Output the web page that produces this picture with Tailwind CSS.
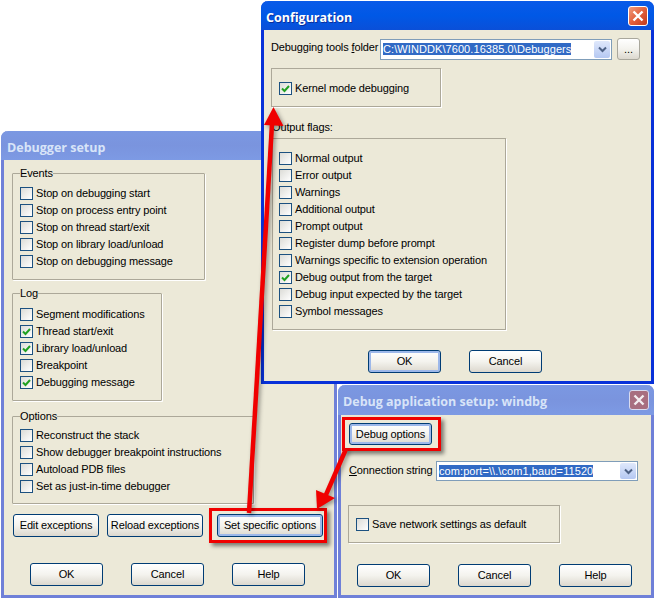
<!DOCTYPE html>
<html lang="en">
<head>
<meta charset="UTF-8">
<title>Debugger setup</title>
<script src="https://cdn.jsdelivr.net/npm/@tailwindcss/browser@4"></script>
</head>
<body class="bg-white">
<div class="relative w-[654px] h-[600px] overflow-hidden bg-white text-[11px] leading-[13px] tracking-[-0.13px] text-black font-['Liberation_Sans',sans-serif]">

  <!-- Debugger setup window (inactive) -->
  <div class="absolute left-[1px] top-[131px] w-[336px] h-[467px] flex flex-col rounded-t-[7px] bg-[#ece9d8] border-x-[3px] border-b-[3px] border-[#6f80d8]">
    <div class="-mx-[3px] h-[29px] shrink-0 flex items-center pl-[6px] pt-[3px] rounded-t-[7px] bg-gradient-to-b from-[#7b98e2] via-[#7a94de] to-[#7d9ae4] text-[#d8e4f8] font-bold tracking-normal text-[12.5px] font-['Open_Sans',sans-serif]">Debugger setup</div>
    <div class="flex flex-col pl-[8px] pt-[7px]">
      <fieldset class="w-[193px] border border-[#aca899] rounded-[1px] shadow-[1px_1px_0_#fff] px-[7px] pt-[5px] pb-[9px]">
        <legend>Events</legend>
        <div data-rows="Stop on debugging start|Stop on process entry point|Stop on thread start/exit|Stop on library load/unload|Stop on debugging message"></div>
      </fieldset>
      <fieldset class="mt-[7px] w-[150px] border border-[#aca899] rounded-[1px] shadow-[1px_1px_0_#fff] px-[7px] pt-[6px] pb-[9px]">
        <legend>Log</legend>
        <div data-rows="Segment modifications|*Thread start/exit|*Library load/unload|Breakpoint|*Debugging message"></div>
      </fieldset>
      <fieldset class="mt-[9px] w-[242px] border border-[#aca899] rounded-[1px] shadow-[1px_1px_0_#fff] px-[7px] pt-[4px] pb-[8px]">
        <legend>Options</legend>
        <div data-rows="Reconstruct the stack|Show debugger breakpoint instructions|Autoload PDB files|Set as just-in-time debugger"></div>
      </fieldset>
      <div class="mt-[10px] flex ml-[1px]">
        <button class="w-[86px] h-[23px] rounded-[3px] border border-[#003c74] bg-gradient-to-b from-white via-[#f4f3ee] to-[#dcd8ce]">Edit exceptions</button>
        <button class="ml-[8px] w-[96px] h-[23px] rounded-[3px] border border-[#003c74] bg-gradient-to-b from-white via-[#f4f3ee] to-[#dcd8ce]">Reload exceptions</button>
        <div class="relative ml-[14px]">
          <button class="w-[106px] h-[23px] rounded-[3px] border border-[#003c74] bg-gradient-to-b from-white via-[#f4f3ee] to-[#dcd8ce] shadow-[inset_0_0_0_2px_#9db8ea]">Set specific options</button>
          <div class="absolute -left-[8px] -top-[6px] -right-[4px] -bottom-[6px] border-[3px] border-[#f00000] shadow-[3px_3px_4px_#0000007a]"></div>
        </div>
      </div>
      <div class="mt-[26px] ml-[18px] flex gap-[28px]">
        <button class="w-[73px] h-[23px] rounded-[3px] border border-[#003c74] bg-gradient-to-b from-white via-[#f4f3ee] to-[#dcd8ce]">OK</button>
        <button class="w-[73px] h-[23px] rounded-[3px] border border-[#003c74] bg-gradient-to-b from-white via-[#f4f3ee] to-[#dcd8ce]">Cancel</button>
        <button class="w-[73px] h-[23px] rounded-[3px] border border-[#003c74] bg-gradient-to-b from-white via-[#f4f3ee] to-[#dcd8ce]">Help</button>
      </div>
    </div>
  </div>

  <!-- Debug application setup window (inactive) -->
  <div class="absolute left-[338px] top-[385px] w-[316px] h-[213px] flex flex-col rounded-t-[7px] bg-[#ece9d8] border-x-[3px] border-b-[3px] border-[#6f80d8]">
    <div class="-mx-[3px] h-[30px] shrink-0 flex items-center justify-between pl-[5px] pr-[5px] rounded-t-[7px] bg-gradient-to-b from-[#7b98e2] via-[#7a94de] to-[#7d9ae4] text-[#d8e4f8] font-bold tracking-normal text-[12.5px] font-['Open_Sans',sans-serif]">
      <span class="pt-[2px]">Debug application setup: windbg</span>
      <span class="w-[20px] h-[20px] flex items-center justify-center rounded-[3px] border border-[#d8dcf0] bg-[#a86f80]">
        <svg width="12" height="12" viewBox="0 0 12 12"><path d="M1.5 1.5 10.5 10.5M10.5 1.5 1.5 10.5" stroke="#f4eef0" stroke-width="2.4" fill="none"/></svg>
      </span>
    </div>
    <div class="flex flex-col pl-[8px] pt-[8px]">
      <div class="relative w-[83px]">
        <button class="w-[83px] h-[22px] rounded-[3px] border border-[#003c74] bg-gradient-to-b from-white via-[#f4f3ee] to-[#dcd8ce] shadow-[inset_0_0_0_2px_#9db8ea]">Debug options</button>
        <div class="absolute -left-[7px] -top-[6px] -right-[9px] -bottom-[6px] border-[3px] border-[#f00000] shadow-[3px_3px_4px_#0000007a]"></div>
      </div>
      <div class="mt-[16px] flex items-center">
        <span class="w-[87px] pb-[2px]"><u>C</u>onnection string</span>
        <div class="w-[202px] h-[20px] flex items-center border border-[#7f9db9] bg-white pl-[2px] pr-[1px]">
          <span class="flex-1 overflow-hidden whitespace-nowrap tracking-[0.08px]"><span class="bg-[#316ac5] text-white">com:port=\\.\com1,baud=11520</span></span>
          <span class="w-[16px] h-[16px] flex items-center justify-center rounded-[2px] bg-gradient-to-b from-[#dfe8fb] to-[#b5c8f2]">
            <svg width="9" height="7" viewBox="0 0 9 7"><path d="M1 1.5 4.5 5 8 1.5" stroke="#4d6185" stroke-width="2" fill="none"/></svg>
          </span>
        </div>
      </div>
      <div class="mt-[24px] -ml-[1px] w-[212px] h-[38px] flex items-center pl-[7px] border border-[#aca899] shadow-[1px_1px_0_#fff]">
        <div class="w-full" data-rows="Save network settings as default"></div>
      </div>
      <div class="mt-[21px] ml-[8px] flex gap-[28px]">
        <button class="w-[73px] h-[23px] rounded-[3px] border border-[#003c74] bg-gradient-to-b from-white via-[#f4f3ee] to-[#dcd8ce]">OK</button>
        <button class="w-[73px] h-[23px] rounded-[3px] border border-[#003c74] bg-gradient-to-b from-white via-[#f4f3ee] to-[#dcd8ce]">Cancel</button>
        <button class="w-[73px] h-[23px] rounded-[3px] border border-[#003c74] bg-gradient-to-b from-white via-[#f4f3ee] to-[#dcd8ce]">Help</button>
      </div>
    </div>
  </div>

  <!-- Configuration window (active) -->
  <div class="absolute left-[261px] top-[1px] w-[393px] h-[383px] flex flex-col rounded-t-[7px] bg-[#ece9d8] border-x-[3px] border-b-[3px] border-[#0831d9]">
    <div class="-mx-[3px] h-[29px] shrink-0 flex items-center justify-between pl-[5px] pr-[6px] rounded-t-[7px] bg-gradient-to-b from-[#0a5ae8] via-[#0058e6] to-[#0a4fd8] text-white font-bold tracking-normal text-[12.5px] font-['Open_Sans',sans-serif] [text-shadow:1px_1px_0_#0b2f9c]">
      <span class="pt-[3px]">Configuration</span>
      <span class="w-[20px] h-[20px] flex items-center justify-center rounded-[3px] border border-white bg-gradient-to-br from-[#ef9a7c] via-[#e2603c] to-[#c0391a]">
        <svg width="12" height="12" viewBox="0 0 12 12"><path d="M1.5 1.5 10.5 10.5M10.5 1.5 1.5 10.5" stroke="#fff" stroke-width="2.4" fill="none"/></svg>
      </span>
    </div>
    <div class="flex flex-col pl-[7px] pt-[8px]">
      <div class="flex items-center">
        <span class="w-[109px] pb-[3px] whitespace-nowrap">Debugging tools <u>f</u>older</span>
        <div class="w-[232px] h-[21px] flex items-center border border-[#7f9db9] bg-white pl-[2px] pr-[1px]">
          <span class="flex-1 overflow-hidden whitespace-nowrap tracking-[0.08px]"><span class="bg-[#316ac5] text-white">C:\WINDDK\7600.16385.0\Debuggers</span></span>
          <span class="w-[16px] h-[17px] flex items-center justify-center rounded-[2px] bg-gradient-to-b from-[#dfe8fb] to-[#b5c8f2]">
            <svg width="9" height="7" viewBox="0 0 9 7"><path d="M1 1.5 4.5 5 8 1.5" stroke="#4d6185" stroke-width="2" fill="none"/></svg>
          </span>
        </div>
        <button class="ml-[5px] w-[23px] h-[22px] rounded-[3px] border border-[#a9a79c] bg-gradient-to-b from-white via-[#f4f3ee] to-[#dcd8ce]">...</button>
      </div>
      <div class="mt-[8px] w-[170px] h-[39px] flex items-center pl-[7px] pt-[1px] border border-[#aca899] shadow-[1px_1px_0_#fff]">
        <div class="w-full" data-rows="*Kernel mode debugging"></div>
      </div>
      <span class="mt-[14px] ml-[1px]">Output flags:</span>
      <div class="mt-[4px] ml-[1px] w-[234px] h-[192px] border border-[#aca899] shadow-[1px_1px_0_#fff] pl-[6px] pt-[11px]">
        <div data-rows="Normal output|Error output|Warnings|Additional output|Prompt output|Register dump before prompt|Warnings specific to extension operation|*Debug output from the target|Debug input expected by the target|Symbol messages"></div>
      </div>
      <div class="mt-[20px] ml-[97px] flex gap-[28px]">
        <button class="w-[73px] h-[23px] rounded-[3px] border border-[#003c74] bg-gradient-to-b from-white via-[#f4f3ee] to-[#dcd8ce] shadow-[inset_0_0_0_2px_#9db8ea]">OK</button>
        <button class="w-[73px] h-[23px] rounded-[3px] border border-[#003c74] bg-gradient-to-b from-white via-[#f4f3ee] to-[#dcd8ce]">Cancel</button>
      </div>
    </div>
  </div>

  <!-- Red arrows drawn over the windows -->
  <svg class="absolute left-0 top-0 drop-shadow-[2px_2px_2px_#00000060]" width="654" height="600" viewBox="0 0 654 600">
    <path d="M249 513 272 124" stroke="#f00000" stroke-width="4.5" fill="none"/>
    <path d="M273.500 107 283.500 126 264 125z" fill="#f00000"/>
    <path d="M346 449 325 497" stroke="#f00000" stroke-width="4.5" fill="none"/>
    <path d="M317 509 316 490 335 498z" fill="#f00000"/>
  </svg>
</div>

<script>
  // checkbox rows: a leading * means ticked
  const tick = '<svg width="9" height="9" viewBox="0 0 9 9"><path d="M1 4.500 3.500 7 8 2" stroke="#21a121" stroke-width="2" fill="none"/></svg>'
  document.querySelectorAll('[data-rows]').forEach(el => {
    el.innerHTML = el.dataset.rows.split('|').map(label => {
      const on = label[0] === '*'
      return `<div class="h-[17px] flex items-center gap-[3px] whitespace-nowrap">
        <span class="w-[13px] h-[13px] flex items-center justify-center border border-[#1c5180] bg-gradient-to-br from-[#dcdcd7] to-white">${on ? tick : ''}</span>
        <span>${on ? label.slice(1) : label}</span>
      </div>`
    }).join('')
  })
</script>
</body>
</html>
